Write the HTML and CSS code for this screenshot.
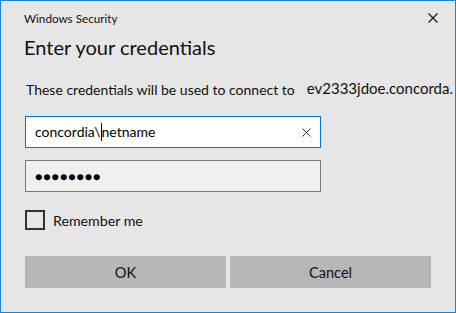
FILE: index.html
```html
<!DOCTYPE html>
<html lang="en">
<head>
  <meta charset="UTF-8">
  <title>Windows Security</title>
  <link rel="stylesheet" href="styles.css">
</head>
<body>

<!-- Janela de credenciais -->
<div class="dialog">
  <div class="titlebar">
    <span class="title">Windows Security</span>
    <svg class="close" width="10" height="10" viewBox="0 0 10 10">
      <path d="M0.5 0.5 L9.5 9.5 M9.5 0.5 L0.5 9.5" stroke="#111" stroke-width="1.1" fill="none"/>
    </svg>
  </div>

  <h1>Enter your credentials</h1>

  <p class="info"><span class="msg">These credentials will be used to connect to</span><span class="host">ev2333jdoe.concorda.</span></p>

  <div class="field focused">
    <span class="value">concordia\<span class="caret"></span>netname</span>
    <svg class="clear" width="9" height="9" viewBox="0 0 9 9">
      <path d="M0.5 0.5 L8.5 8.5 M8.5 0.5 L0.5 8.5" stroke="#333" stroke-width="1" fill="none"/>
    </svg>
  </div>

  <div class="field password">
    <span class="dots">●●●●●●●●</span>
  </div>

  <label class="check">
    <span class="box"></span>
    Remember me
  </label>

  <div class="buttons">
    <button>OK</button>
    <button>Cancel</button>
  </div>
</div>

</body>
</html>
```

FILE: styles.css
```css
body {
  margin: 0;
  background: #e6e6e6;
  font-family: Lato, "Open Sans", sans-serif;
  color: #000;
}
.dialog {
  width: 456px;
  height: 313px;
  box-sizing: border-box;
  border: 1px solid #1883d7;
  background: #e6e6e6;
  padding: 0 24px 0 23px;
  display: flex;
  flex-direction: column;
}
.titlebar {
  display: flex;
  justify-content: space-between;
  align-items: center;
  height: 16px;
  margin-top: 9px;
}
.title {
  font-size: 11.7px;
  color: #111;
}
.close {
  margin-right: -7px;
}
h1 {
  font-size: 20px;
  font-weight: 400;
  color: #111;
  margin: 7px 0 0 0;
  line-height: 28px;
}
.info {
  margin: 18px 0 0 2px;
  line-height: 20px;
  color: #111;
  white-space: nowrap;
}
.msg {
  font-size: 14px;
}
.host {
  margin-left: 12px;
  font-size: 15px;
  position: relative;
  top: -1px;
}
.field {
  width: 296px;
  height: 32px;
  box-sizing: border-box;
  margin-left: 1px;
  display: flex;
  align-items: center;
  justify-content: space-between;
  padding: 0 9px 0 9px;
  font-size: 14px;
}
.focused {
  margin-top: 16px;
  background: #fff;
  border: 1px solid #0078d7;
}
.caret {
  display: inline-block;
  width: 1px;
  height: 18px;
  background: #000;
  vertical-align: -4px;
}
.password {
  margin-top: 12px;
  background: #f0f0f0;
  border: 1px solid #7a7a7a;
}
.dots {
  font-size: 12.5px;
  letter-spacing: 0.8px;
}
.check {
  display: flex;
  align-items: center;
  margin: 18px 0 0 1px;
  font-size: 14.2px;
  color: #111;
}
.box {
  width: 20px;
  height: 20px;
  box-sizing: border-box;
  border: 2px solid #333;
  margin-right: 8px;
}
.buttons {
  display: flex;
  gap: 4px;
  margin: 26px 0 0 1px;
}
.buttons button {
  width: 201px;
  height: 32px;
  background: #b7b7b7;
  border: none;
  font-family: inherit;
  font-size: 14.6px;
  color: #111;
  padding: 0;
}
```
